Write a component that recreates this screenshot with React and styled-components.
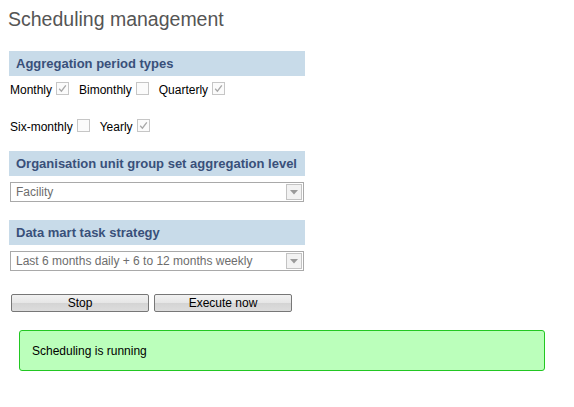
import React from "react";
import styled, { createGlobalStyle } from "styled-components";

const GlobalStyle = createGlobalStyle`
  body {
    margin: 0;
    background: #ffffff;
    font-family: "Liberation Sans", Arial, sans-serif;
    font-size: 12px;
    color: #000;
  }
`;

const periods = [
  [
    { label: "Monthly", checked: true },
    { label: "Bimonthly", checked: false },
    { label: "Quarterly", checked: true },
  ],
  [
    { label: "Six-monthly", checked: false },
    { label: "Yearly", checked: true },
  ],
];

function Check({ checked }) {
  return (
    <Box>
      {checked && (
        <svg width="11" height="11" viewBox="0 0 11 11">
          <path d="M2.2 5.8 L4.4 8.2 L8.8 2.4" fill="none" stroke="#a8a8a8" strokeWidth="1.3" />
        </svg>
      )}
    </Box>
  );
}

function Select({ value }) {
  return (
    <SelectBox>
      <span>{value}</span>
      <ArrowButton>
        <svg width="8" height="5" viewBox="0 0 8 5">
          <path d="M0 0 L8 0 L4 4.5 Z" fill="#9a9a9a" />
        </svg>
      </ArrowButton>
    </SelectBox>
  );
}

function App() {
  return (
    <Page>
      <GlobalStyle />
      <Title>Scheduling management</Title>

      <Header>Aggregation period types</Header>
      <PeriodRow $top={7}>
        {periods[0].map((p) => (
          <Item key={p.label}>
            {p.label}
            <Check checked={p.checked} />
          </Item>
        ))}
      </PeriodRow>
      <PeriodRow $top={23}>
        {periods[1].map((p) => (
          <Item key={p.label}>
            {p.label}
            <Check checked={p.checked} />
          </Item>
        ))}
      </PeriodRow>

      <Header $top={17}>Organisation unit group set aggregation level</Header>
      <Select value="Facility" />

      <Header $top={18}>Data mart task strategy</Header>
      <Select value="Last 6 months daily + 6 to 12 months weekly" />

      <Buttons>
        <Button>Stop</Button>
        <Button>Execute now</Button>
      </Buttons>

      <Message>Scheduling is running</Message>
    </Page>
  );
}

export default App;

const Page = styled.div`
  padding: 8px 0 0 9px;
  width: 560px;
`;

const Title = styled.h1`
  margin: 0 0 0 -1px;
  font-family: "Liberation Sans", Arial, sans-serif;
  font-weight: normal;
  font-size: 19.5px;
  line-height: 22px;
  color: #555555;
`;

const Header = styled.div`
  margin-top: ${(p) => (p.$top ?? 21)}px;
  width: 296px;
  height: 25px;
  box-sizing: border-box;
  padding-left: 7px;
  background: #c8dbe9;
  color: #39507a;
  font-weight: bold;
  font-size: 13px;
  line-height: 25px;
`;

const PeriodRow = styled.div`
  display: flex;
  align-items: center;
  gap: 10px;
  margin-top: ${(p) => p.$top}px;
  margin-left: 1px;
  height: 14px;
`;

const Item = styled.label`
  display: flex;
  align-items: center;
  gap: 4px;
  font-size: 12px;
  color: #000;
`;

const Box = styled.span`
  display: inline-flex;
  align-items: center;
  justify-content: center;
  width: 11px;
  height: 11px;
  border: 1px solid #c6c6c6;
  background: #fbfbfb;
  margin-top: -3px;
`;

const SelectBox = styled.div`
  margin-top: 6px;
  margin-left: 1px;
  width: 294px;
  height: 20px;
  box-sizing: border-box;
  border: 1px solid #a9a9a9;
  display: flex;
  align-items: center;
  justify-content: space-between;
  padding: 0 1px 0 5px;
  color: #6d6d6d;
  font-size: 12px;
`;

const ArrowButton = styled.span`
  width: 16px;
  height: 16px;
  box-sizing: border-box;
  border: 1px solid #c3c3c3;
  background: #f2f2f2;
  display: flex;
  align-items: center;
  justify-content: center;
  padding-top: 1px;
`;

const Buttons = styled.div`
  display: flex;
  gap: 5px;
  margin-top: 23px;
  margin-left: 2px;
`;

const Button = styled.button`
  width: 138px;
  height: 18px;
  padding: 0;
  border: 1px solid #777777;
  border-radius: 2px;
  background: linear-gradient(#f2f2f2, #e6e6e6 50%, #d4d4d4 51%, #dddddd);
  font-family: "Liberation Sans", Arial, sans-serif;
  font-size: 12px;
  color: #000;
  line-height: 16px;
`;

const Message = styled.div`
  margin: 18px 0 0 10px;
  width: 526px;
  height: 41px;
  box-sizing: border-box;
  border: 1px solid #22c722;
  border-radius: 3px;
  background: #bbffbb;
  padding-left: 12px;
  display: flex;
  align-items: center;
  font-size: 12px;
  color: #000;
`;
